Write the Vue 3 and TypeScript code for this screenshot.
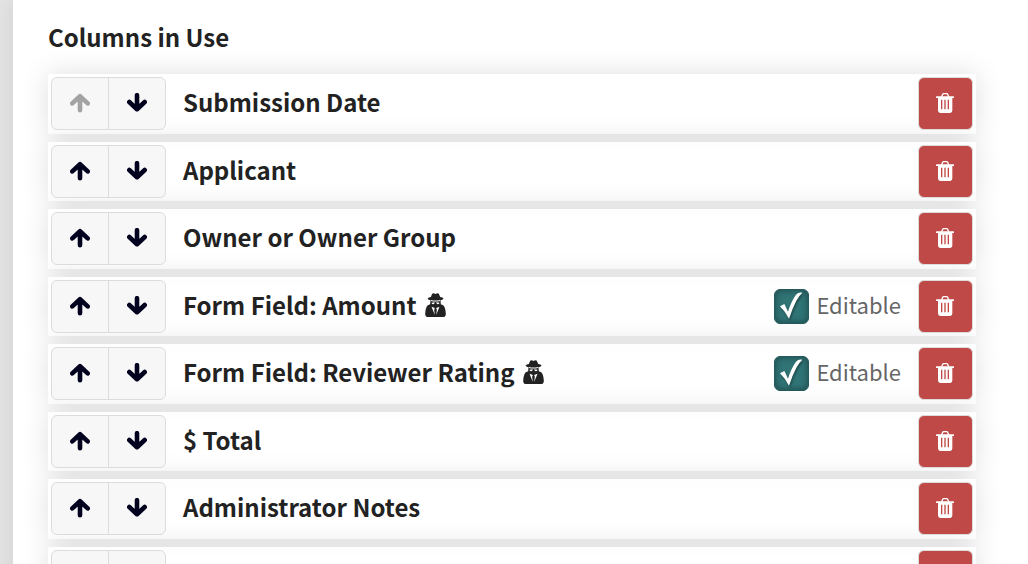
<script setup lang="ts">
import { ref } from 'vue'

interface Column {
  id: number
  name: string
  anonymized?: boolean
  editable?: boolean
}

const columns = ref<Column[]>([
  { id: 1, name: 'Submission Date' },
  { id: 2, name: 'Applicant' },
  { id: 3, name: 'Owner or Owner Group' },
  { id: 4, name: 'Form Field: Amount', anonymized: true, editable: true },
  { id: 5, name: 'Form Field: Reviewer Rating', anonymized: true, editable: true },
  { id: 6, name: '$ Total' },
  { id: 7, name: 'Administrator Notes' },
  { id: 8, name: '' },
])

function move(index: number, step: number) {
  const target = index + step
  if (target < 0 || target >= columns.value.length) return
  const [item] = columns.value.splice(index, 1)
  columns.value.splice(target, 0, item)
}

function remove(index: number) {
  columns.value.splice(index, 1)
}
</script>

<template>
  <div class="page">
    <main class="panel">
      <h2 class="title">Columns in Use</h2>
      <ul class="list">
        <li v-for="(column, index) in columns" :key="column.id" class="row">
          <div class="mover">
            <button type="button" aria-label="Move up" :disabled="index === 0" @click="move(index, -1)">
              <svg class="arrow" viewBox="0 0 20 20" aria-hidden="true">
                <path d="M10 17.2V4M2.3 10.4L10 3.2l7.7 7.2" />
              </svg>
            </button>
            <button type="button" aria-label="Move down" @click="move(index, 1)">
              <svg class="arrow" viewBox="0 0 20 20" aria-hidden="true">
                <path d="M10 2.2v13.2M2.3 9L10 16.2 17.7 9" />
              </svg>
            </button>
          </div>
          <span class="name">
            {{ column.name }}
            <svg v-if="column.anonymized" class="spy" viewBox="0 0 62 72" aria-hidden="true">
              <path d="M21 2Q25-1 31 3Q37-1 41 2L45 12Q54 13 55 17Q52 21 46 22L47 34Q56 36 58 42Q62 52 62 62Q62 72 53 72H9Q0 72 0 62Q0 52 4 42Q6 36 15 34L16 22Q10 21 7 17Q10 13 17 12Z" />
              <path class="cut" d="M17 21Q31 24 45 21V24Q31 27 17 24ZM19 29L29 28Q28 34 24 34Q20 34 19 29ZM43 29L33 28Q34 34 38 34Q42 34 43 29ZM19 41L29 45L27 50L29 66ZM43 41L33 45L35 50L33 66Z" />
            </svg>
          </span>
          <label v-if="column.editable" class="editable">
            <span class="tick">
              <input v-model="column.editable" type="checkbox" />
              <svg viewBox="0 0 105 105" aria-hidden="true">
                <path d="M18 52L31 45Q36 54 42 68Q52 36 66 17Q73 9 85 11Q76 19 67 35Q55 58 45 89Q34 68 18 52Z" />
              </svg>
            </span>
            <span class="caption">Editable</span>
          </label>
          <button type="button" class="delete" aria-label="Remove column" @click="remove(index)">
            <svg viewBox="0 0 54 60" aria-hidden="true">
              <path class="handle" d="M17 11L20 4Q21 2 23 2H32Q34 2 35 4L38 11" />
              <path fill-rule="evenodd" d="M2 10H52Q54 10 54 12V15H49V52Q49 60 43 60H12Q6 60 6 52V15H0V12Q0 10 2 10ZM15 20V49H19V20ZM25 20V49H29V20ZM35 20V49H39V20Z" />
            </svg>
          </button>
        </li>
      </ul>
    </main>
  </div>
</template>

<style>
body {
  margin: 0;
  background: #e3e3e3;
}
</style>

<style scoped>
.page {
  height: 100vh;
  padding-left: 13px;
  overflow: hidden;
  background: #e3e3e3;
  color: #222;
  font-family: 'Noto Sans CJK SC', 'Noto Sans', sans-serif;
}

.panel {
  min-height: 100%;
  box-sizing: border-box;
  padding: 21px 52px 0 35px;
  background: #fff;
  box-shadow: 0 0 20px rgba(0, 0, 0, 0.08);
}

.title {
  margin: 0 0 21px;
  font-size: 24px;
  font-weight: 700;
  line-height: 32px;
}

.list {
  display: flex;
  flex-direction: column;
  gap: 8px;
  margin: 0;
  padding: 0;
  list-style: none;
}

.row {
  display: flex;
  align-items: flex-start;
  box-sizing: border-box;
  height: 60px;
  padding: 3px;
  background: rgba(255, 255, 255, 0.8);
  box-shadow: 0 0 28px rgba(0, 0, 0, 0.13);
}

.row:nth-child(even) {
  height: 59px;
}

button {
  display: flex;
  align-items: center;
  justify-content: center;
  margin: 0;
  padding: 0;
  cursor: pointer;
}

/* Keep the controls above the shadow cast by the next row. */
.mover,
.delete {
  z-index: 1;
}

.mover {
  display: flex;
  box-sizing: border-box;
  width: 115px;
  height: 53px;
  border: 1px solid #dcdcdc;
  border-radius: 6px;
  background: #f7f7f7;
}

.mover button {
  flex: 1;
  padding-bottom: 2px;
  border: 0;
  background: none;
  color: #02021e;
}

.mover button + button {
  border-left: 1px solid #dcdcdc;
}

.mover button:disabled {
  color: #a3a3a3;
}

.arrow {
  width: 20px;
  height: 20px;
  fill: none;
  stroke: currentColor;
  stroke-width: 4.6;
  stroke-linecap: round;
  stroke-linejoin: round;
}

.name {
  flex: 1;
  display: flex;
  align-items: center;
  gap: 8px;
  box-sizing: border-box;
  height: 53px;
  padding: 0 0 3px 17px;
  font-size: 24px;
  font-weight: 700;
  line-height: 32px;
  white-space: nowrap;
}

.spy {
  width: 21px;
  height: 24px;
  fill: #222;
}

.spy .cut {
  fill: #fff;
}

.editable {
  display: flex;
  align-items: center;
  gap: 7px;
  height: 53px;
  padding-right: 17px;
  color: #666;
  font-size: 22px;
  line-height: 32px;
}

.caption {
  padding-bottom: 5px;
}

.tick {
  display: grid;
  width: 35px;
  height: 35px;
}

.tick > * {
  grid-area: 1 / 1;
}

.tick input {
  appearance: none;
  width: 35px;
  height: 35px;
  margin: 0;
  border: 1px solid #26595b;
  border-radius: 6px;
  background: #307476;
  box-shadow: inset 0 0 7px rgba(0, 0, 0, 0.4);
}

.tick svg {
  width: 35px;
  height: 35px;
  fill: #fff;
  filter: drop-shadow(1px 2px 1px rgba(0, 0, 0, 0.35));
  pointer-events: none;
}

.delete {
  box-sizing: border-box;
  width: 55px;
  height: 53px;
  padding: 0 1px 2px 0;
  border: 1px solid #dcdcdc;
  border-radius: 6px;
  background: #bf4946;
}

.delete svg {
  width: 18px;
  height: 20px;
  fill: #fff;
}

.delete .handle {
  fill: none;
  stroke: #fff;
  stroke-width: 4;
}
</style>
